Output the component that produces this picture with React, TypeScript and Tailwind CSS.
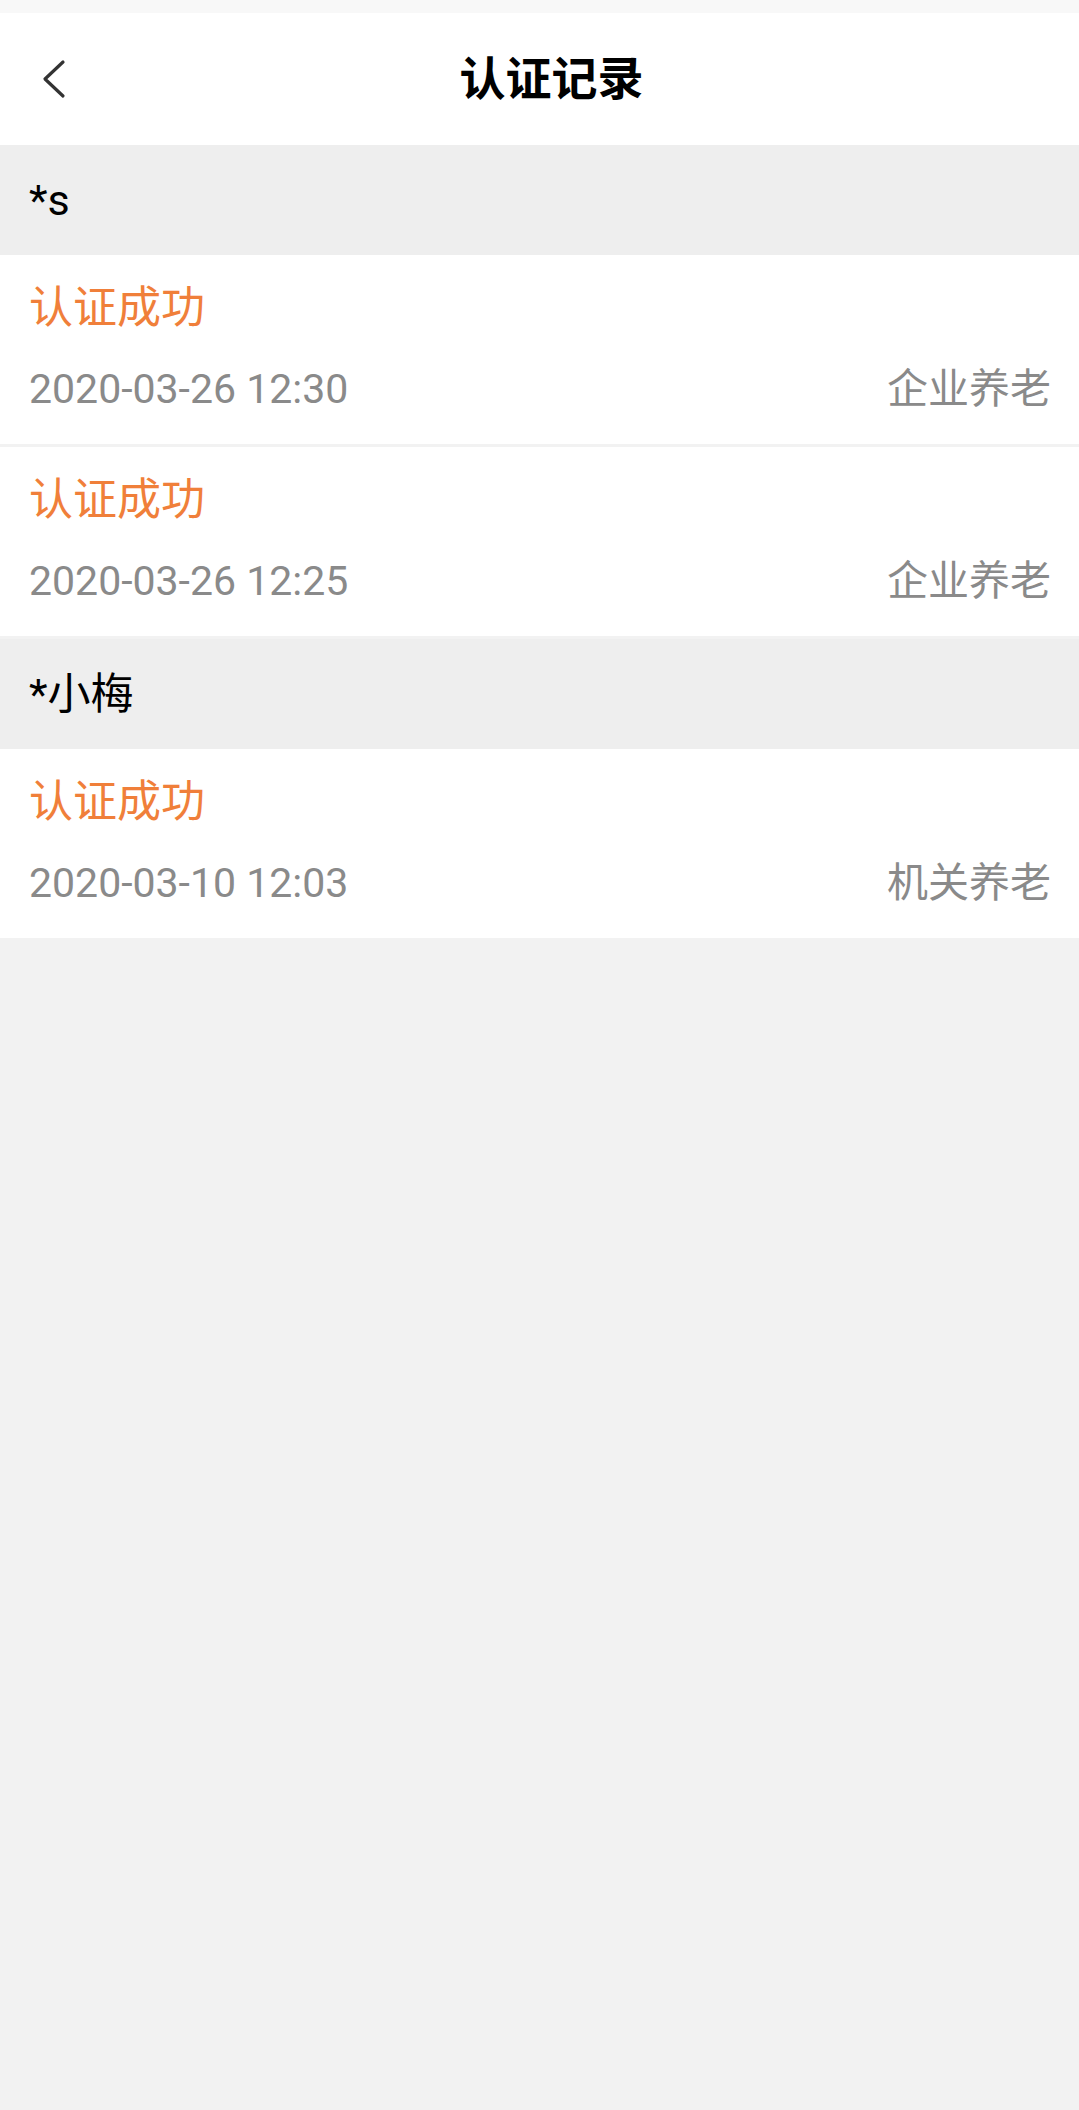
const groups = [
  {
    name: "*s",
    records: [
      { status: "认证成功", time: "2020-03-26 12:30", type: "企业养老" },
      { status: "认证成功", time: "2020-03-26 12:25", type: "企业养老" },
    ],
  },
  {
    name: "*小梅",
    records: [{ status: "认证成功", time: "2020-03-10 12:03", type: "机关养老" }],
  },
];

function BackIcon() {
  return (
    <svg width="24" height="40" viewBox="0 0 24 40" fill="none">
      <path d="M21 3 L3 20 L21 37" stroke="#333333" strokeWidth="3.2" strokeLinecap="round" strokeLinejoin="round" />
    </svg>
  );
}

export default function App() {
  return (
    <div className="min-h-[2110px] w-full bg-[#f2f2f2] font-['Roboto','Noto_Sans_CJK_SC',sans-serif]">
      <div className="h-[13px] bg-[#f8f8f8]" />
      <header className="relative flex h-[132px] items-center justify-center bg-white pl-[24px]">
        <button className="absolute left-[42px] top-1/2 -translate-y-1/2">
          <BackIcon />
        </button>
        <h1 className="text-[46px] font-bold leading-none text-black">认证记录</h1>
      </header>

      {groups.map((group) => (
        <section key={group.name}>
          <div className="flex h-[110px] items-center bg-[#eeeeee] px-[29px] text-[43px] leading-none text-black">
            {group.name}
          </div>
          <div className="flex flex-col gap-[3px] border-b-[3px] border-[#f2f2f2]">
            {group.records.map((r) => (
              <div key={r.time} className="flex h-[189px] flex-col bg-white pl-[29px] pr-[28px] pt-[31px]">
                <div className="text-[44px] leading-[44px] text-[#f07f3a]">{r.status}</div>
                <div className="mt-[37px] flex items-center justify-between text-[41px] leading-[44px] text-[#8a8a8a]">
                  <span>{r.time}</span>
                  <span>{r.type}</span>
                </div>
              </div>
            ))}
          </div>
        </section>
      ))}
    </div>
  );
}
